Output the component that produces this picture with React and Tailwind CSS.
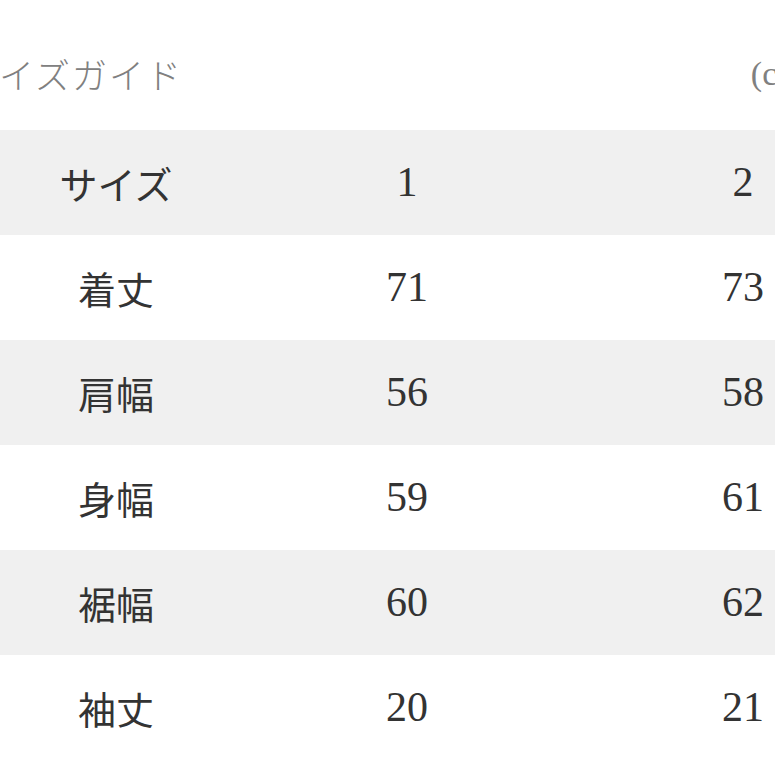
import React from "react";

const rows = [
  ["着丈", "71", "73"],
  ["肩幅", "56", "58"],
  ["身幅", "59", "61"],
  ["裾幅", "60", "62"],
  ["袖丈", "20", "21"],
];

function Row({ cells, gray }) {
  return (
    <div className={`flex h-[105px] items-center ${gray ? "bg-[#f0f0f0]" : "bg-white"}`}>
      <div className="w-[232px] shrink-0 text-center text-[38px] text-[#333] font-['Noto_Sans_CJK_JP',sans-serif]">
        {cells[0]}
      </div>
      <div className="w-[350px] shrink-0 text-center text-[42px] text-[#333] font-['Liberation_Serif',serif]">
        {cells[1]}
      </div>
      <div className="w-[322px] shrink-0 text-center text-[42px] text-[#333] font-['Liberation_Serif',serif]">
        {cells[2]}
      </div>
    </div>
  );
}

export default function App() {
  return (
    <div className="w-[775px] h-[775px] overflow-hidden bg-white">
      {/* title */}
      <div className="flex h-[130px] items-start justify-between pt-[50px]">
        <div className="-ml-[38px] text-[35px] leading-[48px] tracking-[2px] font-light text-[#808080] font-['Noto_Sans_CJK_JP',sans-serif]">
          サイズガイド
        </div>
        <div className="-mr-[40px] text-[34px] leading-[48px] text-[#808080] font-['Liberation_Serif',serif]">
          (cm)
        </div>
      </div>

      {/* table */}
      <div className="w-[904px]">
        <Row cells={["サイズ", "1", "2"]} gray />
        {rows.map((r, i) => (
          <Row key={r[0]} cells={r} gray={i % 2 === 1} />
        ))}
      </div>
    </div>
  );
}
